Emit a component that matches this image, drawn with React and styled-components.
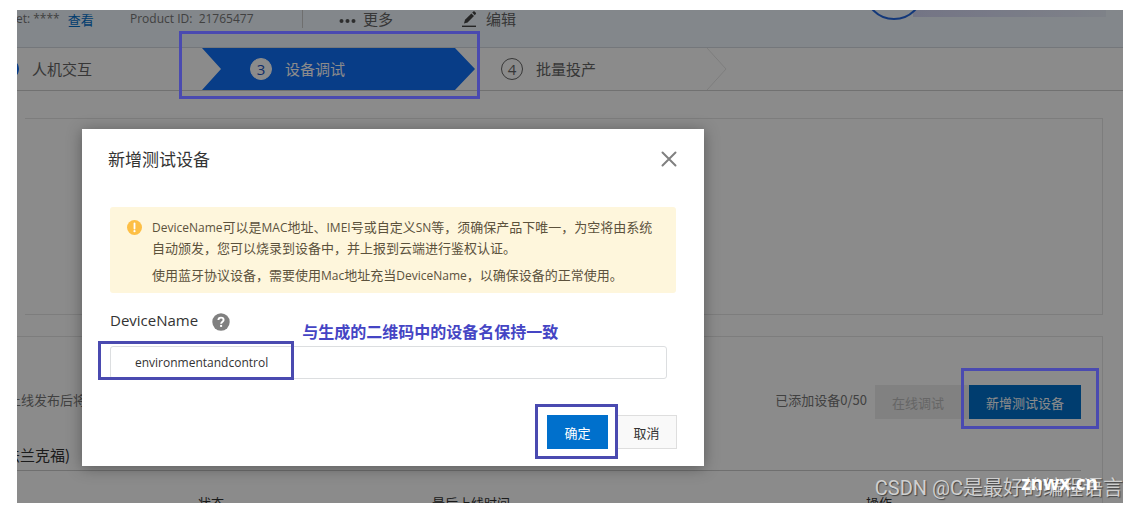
import React, { useState } from 'react'
import styled, { createGlobalStyle, css } from 'styled-components';

const mark = '#4a4ab0';
const cjk = '"Noto Sans CJK SC", "Noto Sans", sans-serif';
const latin = '"Open Sans", "Noto Sans CJK SC", sans-serif';

const GlobalStyle = createGlobalStyle`
  * { box-sizing: border-box; }
  body {
    margin: 0;
    background: #fff;
    font-family: ${cjk};
    font-size: 13px;
    color: #333;
  }
  button, input { font-family: inherit; font-size: inherit; }
  p, h2, h3 { margin: 0; font-weight: normal; }
`;

const Frame = styled.div`
  position: relative;
  height: calc(100vh - 15px);
  margin: 10px 16px 0 17px;
  overflow: hidden;
  background: #fff;
`;
// the console is scrolled a little to the right
const Page = styled.div`
  margin-left: -12px;
`;

// highlight box drawn round a part, above the mask
const Marked = styled.div`
  position: relative;
  &::after {
    content: '';
    position: absolute;
    inset: ${props => props.$inset};
    border: 3px solid ${mark};
    z-index: 5;
    pointer-events: none;
  }
`;

/* product bar */
const TopBar = styled.header`
  position: relative;
  display: flex;
  align-items: flex-start;
  height: 38px;
  padding-left: 6px;
  border-bottom: 1px solid #d5dbe2;
  background: #f0f8ff;
  font-family: ${latin};
  font-size: 12px;
  line-height: 18px;
  color: #777;
`;
const Secret = styled.div`
  display: flex;
  gap: 8px;
  width: 119px;
`;
const TextLink = styled.a`
  font-size: 13px;
  line-height: 21px;
  color: #0070cc;
  text-decoration: none;
`;
const ProductId = styled.div`
  width: 173px;
  border-right: 1px solid #ccc;
`;
const BarButton = styled.button`
  display: flex;
  align-items: center;
  gap: ${props => props.$gap};
  margin-left: ${props => props.$left};
  padding: 0;
  border: 0;
  background: none;
  font-size: 15px;
  line-height: 18px;
  color: #666;
`;
const Decor = styled.svg`
  display: block;
  margin-left: auto;
  margin-right: 16px;
`;

/* steps */
const Steps = styled.nav`
  display: flex;
  height: 43px;
  border-bottom: 1px solid #d0d0d0;
  font-size: 15px;
  line-height: 20px;
`;
const Step = styled.div`
  display: flex;
  align-items: center;
  gap: 13px;
  height: 42px;
  color: #666;
  ${props => props.$first && css`width: 205px; margin-left: -8px;`}
  ${props => props.$next && css`width: 232px; padding-left: 26px;`}
  ${props => props.$active && css`
    width: 273px;
    padding-left: 48px;
    color: #fff;
    background: #1070f8;
    clip-path: polygon(0 0, 253px 0, 100% 50%, 253px 100%, 0 100%, 19px 50%);
  `}
`;
const Num = styled.span`
  display: flex;
  align-items: center;
  justify-content: center;
  width: 22px;
  height: 22px;
  border-radius: 11px;
  border: 1px solid ${props => props.$solid ? '#fff' : '#666'};
  font-family: ${latin};
  ${props => props.$solid && css`background: #fff; color: #1a52c0;`}
  ${props => props.$done && css`background: #1070f8; border-color: #1070f8;`}
`;

/* cards */
const Card = styled.section`
  margin: ${props => props.$top} 20px 0 20px;
  border: 1px solid #e6e6e6;
  border-left: 0;
  ${props => props.$empty ? css`height: 197px;` : css`padding: 48px 21px 0 0; margin-left: 0;`}
`;
const Toolbar = styled.div`
  display: flex;
  align-items: center;
  color: #777;
`;
const Note = styled.span`
  padding-left: 3px;
  padding-bottom: 4px;
  line-height: 20px;
`;
const Count = styled.span`
  margin-left: auto;
  margin-right: 8px;
  padding-bottom: 4px;
  line-height: 20px;
`;
const Button = styled.button`
  height: 34px;
  width: ${props => props.$width};
  padding: 0;
  border: 1px solid #dedede;
  background: #f9f9f9;
  color: #333;
  ${props => props.$primary && css`background: #0070cc; border-color: #0070cc; color: #fff;`}
  &:disabled {
    padding-right: 8px;
    background: #ececec;
    border-color: #ececec;
    color: #bbb;
  }
`;
const Region = styled.h3`
  margin-top: 25px;
  padding-bottom: 4px;
  border-bottom: 1px solid #ccc;
  font-size: 15px;
  line-height: 22px;
`;
const Table = styled.table`
  width: 100%;
  table-layout: fixed;
  border-collapse: collapse;
  th {
    padding: 22px 0 10px;
    text-align: left;
    font-weight: normal;
    line-height: 20px;
  }
`;

/* dialog */
const Mask = styled.div`
  position: absolute;
  inset: 0;
  background: rgba(0, 0, 0, 0.455);
  z-index: 1;
`;
const Modal = styled.div`
  position: absolute;
  top: 119px;
  left: 65px;
  width: 622px;
  padding: 18px 27px 17px 28px;
  background: #fff;
  box-shadow: 0 2px 14px rgba(0, 0, 0, 0.35);
  z-index: 10;
`;
const ModalHead = styled.div`
  display: flex;
  align-items: center;
  justify-content: space-between;
  margin-left: -2px;
  h2 {
    font-size: 17px;
    line-height: 24px;
  }
`;
const Close = styled.button`
  display: flex;
  padding: 0;
  border: 0;
  background: none;
`;
const Alert = styled.div`
  display: flex;
  gap: 10px;
  margin: 36px 1px 0 0;
  padding: 9px 16px 8px 17px;
  border-radius: 3px;
  background: #fef6dc;
  color: #5c523c;
  line-height: 21px;
  svg { flex: none; margin-top: 4px; }
  p + p { margin-top: 6px; }
`;
const Term = styled.span`
  font-family: ${latin};
  font-size: 12px;
  line-height: 12px;
`;
const LabelRow = styled.div`
  display: flex;
  gap: 14px;
  height: 36px;
  margin-top: 17px;
  label {
    font-family: ${latin};
    font-size: 15px;
    line-height: 20px;
  }
  svg { margin-top: 3px; }
`;
const Remark = styled.strong`
  margin: 10px 0 0 58px;
  font-size: 16px;
  line-height: 22px;
  color: #4545c4;
`;
const Field = styled.input`
  display: block;
  width: 100%;
  height: 33px;
  padding: 0 24px;
  border: 1px solid #dcdee0;
  border-radius: 3px;
  background: #fff;
  font-family: ${latin};
  font-size: 12px;
  color: #333;
`;
const FieldBox = styled(Marked)`
  margin-right: 10px;
  &::after { width: 190px; }
`;
const ModalFoot = styled.div`
  display: flex;
  justify-content: flex-end;
  gap: 8px;
  margin-top: 36px;
`;

/* watermarks */
const Watermark = styled.div`
  position: absolute;
  right: 0;
  bottom: 1px;
  font-family: Roboto, "Noto Sans CJK SC", sans-serif;
  font-size: 20px;
  line-height: 28px;
  color: #cfcfcf;
  text-shadow: 1px 1px 1px #444;
  white-space: nowrap;
  z-index: 11;
`;
const SiteMark = styled(Watermark)`
  right: 25px;
  bottom: 6px;
  font-family: ${latin};
  font-size: 19px;
  font-weight: bold;
  color: #fff;
  text-shadow: none;
`;

const CloseIcon = () => (
  <svg width="16" height="16" viewBox="0 0 16 16" fill="none" stroke="#808080" strokeWidth="2">
    <path d="M1.5 1.5L14.5 14.5M14.5 1.5L1.5 14.5" strokeLinecap="round" />
  </svg>
);
const WarnIcon = () => (
  <svg width="15" height="15" viewBox="0 0 15 15">
    <circle cx="7.5" cy="7.5" r="7.5" fill="#fdbf45" />
    <path d="M7.5 3.4V8.6" stroke="#fff" strokeWidth="1.8" strokeLinecap="round" />
    <circle cx="7.5" cy="11.2" r="1.1" fill="#fff" />
  </svg>
);
const HelpIcon = () => (
  <svg width="18" height="18" viewBox="0 0 18 18">
    <circle cx="9" cy="9" r="8.7" fill="#808080" />
    <path d="M6.4 7.1C6.4 5.5 7.5 4.6 9 4.6s2.6.9 2.6 2.3c0 1.7-2.5 1.9-2.5 3.9" fill="none" stroke="#fff" strokeWidth="1.9" />
    <rect x="8.1" y="11.9" width="2" height="2" fill="#fff" />
  </svg>
);
const DotsIcon = () => (
  <svg width="17" height="16" viewBox="0 0 17 16" fill="#555">
    <circle cx="2.5" cy="10" r="2" />
    <circle cx="8.5" cy="10" r="2" />
    <circle cx="14.5" cy="10" r="2" />
  </svg>
);
const PenIcon = () => (
  <svg width="15" height="18" viewBox="0 0 15 18" fill="#444">
    <path d="M2 13.5L3 9.8L9.4 3.4L12 6L5.6 12.4Z" />
    <path d="M10.2 2.6L11.4 1.4Q12 1 12.6 1.6L13.8 2.8Q14.3 3.4 13.8 4L12.7 5.2Z" />
    <rect x="0" y="15.6" width="14" height="1.4" />
  </svg>
);

export default function App() {
  const [name, setName] = useState('environmentandcontrol');

  return (
    <>
      <GlobalStyle />
      <Frame>
        <Page>
          <TopBar>
            <Secret>
              <span>ret: ****</span>
              <TextLink href="#secret">查看</TextLink>
            </Secret>
            <ProductId>Product ID:&nbsp; 21765477</ProductId>
            <BarButton type="button" $left="36px" $gap="7px"><DotsIcon />更多</BarButton>
            <BarButton type="button" $left="69px" $gap="9px"><PenIcon />编辑</BarButton>
            <Decor width="240" height="12" viewBox="0 0 240 12">
              <defs>
                <linearGradient id="glow">
                  <stop offset="0" stopColor="#d4d6f5" />
                  <stop offset="1" stopColor="#e8eefa" />
                </linearGradient>
              </defs>
              <rect x="46" y="0" width="193" height="7" fill="url(#glow)" />
              <circle cx="27" cy="-20" r="29" fill="#f0f8ff" stroke="#2468e0" strokeWidth="2" />
            </Decor>
          </TopBar>

          <Steps>
            <Step $first><Num $done />人机交互</Step>
            <Marked $inset="-17px -5px -9px -23px">
              <Step $active><Num $solid>3</Num>设备调试</Step>
            </Marked>
            <Step $next><Num>4</Num>批量投产</Step>
            <svg width="20" height="42" viewBox="0 0 20 42" fill="none" stroke="#e6e6e6">
              <path d="M0 0L19 21L0 42" />
            </svg>
          </Steps>

          <Card $empty $top="27px" />
          <Card $top="21px">
            <Toolbar>
              <Note>上线发布后将</Note>
              <Count>已添加设备0/50</Count>
              <Button type="button" disabled $width="94px">在线调试</Button>
              <Marked $inset="-17px -18px -10px -8px">
                <Button type="button" $primary $width="112px">新增测试设备</Button>
              </Marked>
            </Toolbar>
            <Region>法兰克福)</Region>
            <Table>
              <colgroup>
                <col width="193" />
                <col width="234" />
                <col width="434" />
                <col />
              </colgroup>
              <thead>
                <tr>
                  <th />
                  <th>状态</th>
                  <th>最后上线时间</th>
                  <th>操作</th>
                </tr>
              </thead>
            </Table>
          </Card>
        </Page>

        <Mask />

        <Modal role="dialog" aria-labelledby="dialog-title">
          <ModalHead>
            <h2 id="dialog-title">新增测试设备</h2>
            <Close type="button" aria-label="关闭"><CloseIcon /></Close>
          </ModalHead>
          <Alert>
            <WarnIcon />
            <div>
              <p>
                <Term>DeviceName</Term>可以是<Term>MAC</Term>地址、<Term>IMEI</Term>号或自定义<Term>SN</Term>等，须确保产品下唯一，为空将由系统自动颁发，您可以烧录到设备中，并上报到云端进行鉴权认证。
              </p>
              <p>
                使用蓝牙协议设备，需要使用<Term>Mac</Term>地址充当<Term>DeviceName</Term>，以确保设备的正常使用。
              </p>
            </div>
          </Alert>
          <LabelRow>
            <label htmlFor="device-name">DeviceName</label>
            <HelpIcon />
            <Remark>与生成的二维码中的设备名保持一致</Remark>
          </LabelRow>
          <FieldBox $inset="-5px auto -1px -12px">
            <Field id="device-name" type="text" value={name} onChange={e => setName(e.target.value)} />
          </FieldBox>
          <ModalFoot>
            <Marked $inset="-11px -10px -10px -12px">
              <Button type="button" $primary $width="61px">确定</Button>
            </Marked>
            <Button type="button" $width="61px">取消</Button>
          </ModalFoot>
        </Modal>

        <Watermark>CSDN @C是最好的编程语言</Watermark>
        <SiteMark>znwx.cn</SiteMark>
      </Frame>
    </>
  )
}
